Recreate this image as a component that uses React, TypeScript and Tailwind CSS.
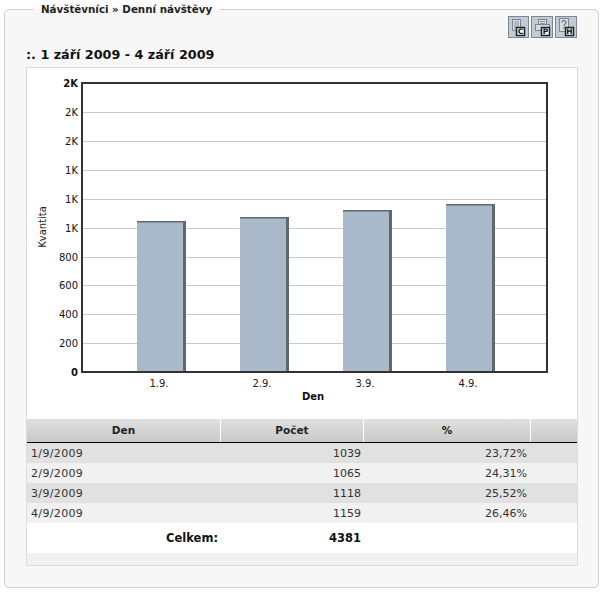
const F = "font-['DejaVu_Sans','Verdana',sans-serif]";

function IconBtn({ letter, kind, width, left }: { letter: string; kind: "c" | "p" | "h"; width: string; left: number }) {
  return (
    <div className={`relative h-[22px] border border-[#7d8794] bg-[#c4cad2] ${width}`}>
      <svg width="20" height="20" viewBox="0 0 20 20" className="block">
        {kind === "c" && (
          <g>
            <rect x="3.5" y="2.5" width="8" height="11" fill="#d8dce2" stroke="#7c8692" />
            <path d="M5 5h5M5 7h5M5 9h5M5 11h5" stroke="#8b95a2" />
          </g>
        )}
        {kind === "p" && (
          <g>
            <rect x="6.5" y="2.5" width="8" height="7" fill="#d8dce2" stroke="#7c8692" />
            <rect x="3.5" y="7.5" width="14" height="6" fill="#d8dce2" stroke="#7c8692" />
            <path d="M8 4.500h5M8 6.500h5" stroke="#8b95a2" />
          </g>
        )}
        {kind === "h" && (
          <g>
            <rect x="3.5" y="1.5" width="9" height="13" fill="#d8dce2" stroke="#7c8692" />
            <path d="M6 5.500c0-2.500 4-2.500 4 0 0 1.500-2 1.500-2 3.500M8 10v1.500" fill="none" stroke="#6e7885" strokeWidth="1.300" />
          </g>
        )}
        <rect x={left + 0.5} y="10.500" width="8" height="8" fill="#f4f5f7" stroke="#1c2430" strokeWidth="1.500" />
      </svg>
      <span style={{ left: left + 1 }} className={`absolute top-[11px] w-[7px] text-center text-[7.500px] leading-[7px] font-bold text-[#111]`}>{letter}</span>
    </div>
  );
}

const yLabels = [
  ["0", 372, true],
  ["200", 343, false],
  ["400", 314, false],
  ["600", 285, false],
  ["800", 257, false],
  ["1K", 228, false],
  ["1K", 199, false],
  ["1K", 170, false],
  ["2K", 141, false],
  ["2K", 112, false],
  ["2K", 83, true],
] as const;

const bars = [
  { x: 137, top: 221, label: "1.9." },
  { x: 240, top: 217, label: "2.9." },
  { x: 343, top: 210, label: "3.9." },
  { x: 446, top: 204, label: "4.9." },
];

function Chart() {
  const ox = 27;
  const oy = 68;
  return (
    <svg width="550" height="351" viewBox={`${ox} ${oy} 550 351`} className="block" fontFamily="'DejaVu Sans', Verdana, sans-serif" fontSize="10">
      {yLabels.slice(1, -1).map(([, y], i) => (
        <line key={i} x1="82" x2="547" y1={y + 0.5} y2={y + 0.5} stroke="#c9c9c9" />
      ))}
      {bars.map((b) => (
        <g key={b.label}>
          <rect x={b.x} y={b.top} width="49" height={372 - b.top} fill="#a9b9ca" />
          <rect x={b.x + 46} y={b.top} width="3" height={372 - b.top} fill="#62676c" />
          <rect x={b.x} y={b.top} width="49" height="1.500" fill="#5f6a74" />
        </g>
      ))}
      <rect x="82" y="83" width="465" height="289" fill="none" stroke="#333333" strokeWidth="2" />
      {yLabels.map(([t, y, bold], i) => (
        <text key={i} x="78" y={y + 4} textAnchor="end" fill="#111" fontWeight={bold ? 700 : 400}>{t}</text>
      ))}
      {bars.map((b) => (
        <text key={b.label} x={b.x + 22} y="387" textAnchor="middle" fill="#222">{b.label}</text>
      ))}
      <text x="313" y="400" textAnchor="middle" fill="#111" fontWeight={700}>Den</text>
      <text x="0" y="0" transform="translate(46 227) rotate(-90)" textAnchor="middle" fill="#222">Kvantita</text>
    </svg>
  );
}

const rows = [
  ["1/9/2009", "1039", "23,72%"],
  ["2/9/2009", "1065", "24,31%"],
  ["3/9/2009", "1118", "25,52%"],
  ["4/9/2009", "1159", "26,46%"],
];

const cols = "grid grid-cols-[194px_143px_167px_46px]";

export default function App() {
  return (
    <div className={`h-[592px] w-[604px] overflow-hidden bg-white pt-[3px] pl-[4px] ${F}`}>
      <fieldset className="m-0 h-[585px] w-[595px] rounded-[5px] border border-[#d0d0d0] bg-[#f7f7f7] pl-[21px] pr-[20px]">
        <legend className="ml-[7px] px-2 text-[10.300px] leading-[13px] font-bold text-[#222]">
          Návštěvníci » Denní návštěvy
        </legend>
        <div className="flex h-[22px] justify-end gap-[2px] pr-[1px]">
          <IconBtn letter="C" kind="c" width="w-[21px]" left={7} />
          <IconBtn letter="P" kind="p" width="w-[22px]" left={9} />
          <IconBtn letter="H" kind="h" width="w-[22px]" left={9} />
        </div>
        <h1 className="mt-[6px] h-[21px] text-[12.750px] leading-[21px] font-bold text-[#111]">
          :. 1 září 2009 - 4 září 2009
        </h1>
        <div className="mt-[2px] w-[552px] border border-[#dcdcdc] bg-white">
          <Chart />
          <div className={`${cols} h-[24px] border-b border-black bg-linear-to-b from-[#e0e0e0] to-[#c8c8c8] text-[10.500px] font-bold text-[#222]`}>
            {["Den", "Počet", "%", ""].map((h, i) => (
              <div key={i} className={`flex items-center justify-center leading-none ${i < 3 ? "border-r border-white" : ""}`}>{h}</div>
            ))}
          </div>
          {rows.map((r, i) => (
            <div key={r[0]} className={`${cols} h-[20px] pt-[1px] items-center text-[11px] leading-[19px] text-[#333] ${i % 2 === 0 ? "bg-[#e1e1e1]" : "bg-[#f1f1f1]"}`}>
              <div className="pl-[4px] tracking-[0.35px]">{r[0]}</div>
              <div className="pr-[3px] text-right">{r[1]}</div>
              <div className="pr-[4px] text-right">{r[2]}</div>
              <div />
            </div>
          ))}
          <div className={`${cols} h-[30px] pt-[1px] items-center bg-white text-[11.500px] font-bold text-[#111]`}>
            <div className="pr-[3px] text-right">Celkem:</div>
            <div className="pr-[3px] text-right">4381</div>
            <div />
            <div />
          </div>
          <div className="h-[12px] bg-[#f1f1f1]" />
        </div>
      </fieldset>
    </div>
  );
}
